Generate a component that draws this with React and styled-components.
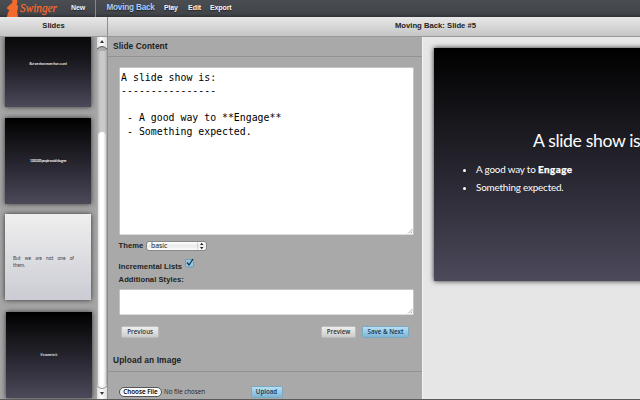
import React from "react";
import styled, { createGlobalStyle, css } from "styled-components";

const GlobalStyle = createGlobalStyle`
  * { box-sizing: border-box; }
  body { margin: 0; overflow: hidden; background: #a9a9a9; }
  button, textarea { margin: 0; font: inherit; }
`;

const Page = styled.div`
  width: 640px;
  height: 400px;
  display: flex;
  flex-direction: column;
  overflow: hidden;
  font-family: "Liberation Sans", Arial, sans-serif;
  font-size: 7.5px;
  color: #222;
  border-bottom: 1px solid #5b5959;
`;

const TopBar = styled.header`
  height: 17px;
  flex: none;
  display: flex;
  background: linear-gradient(#4a4d51, #414549 80%, #303438);
`;

const BrandArea = styled.div`
  width: 96px;
  display: flex;
  border-right: 1px solid #85888b;
`;

const Logo = styled.svg`
  width: 53px;
  height: 17px;
  margin-left: 6px;
  flex: none;
  overflow: visible;
`;

const NavLink = styled.a`
  width: ${(p) => p.$width}px;
  flex: none;
  margin-left: ${(p) => p.$gap}px;
  line-height: 16px;
  font-size: ${(p) => (p.$current ? 8.2 : 7)}px;
  font-weight: bold;
  letter-spacing: ${(p) => p.$track || 0}px;
  white-space: nowrap;
  color: ${(p) => (p.$current ? "#a9cdfb" : "#f7f7f7")};
  text-shadow: 0 1px 1px #222;
`;

const TitleBar = styled.div`
  height: 20px;
  flex: none;
  display: flex;
  line-height: 17px;
  font-weight: bold;
  text-align: center;
  background: linear-gradient(#e8e8e8, #c5c5c5);
  border-bottom: 1px solid #999;
  box-shadow: 0 1px 0 #aaa;
`;

const SlidesTitle = styled.div`
  width: 108px;
  border-right: 1px solid #8d8d8d;
  font-size: 7.6px;
`;

const DocumentTitle = styled.div`
  flex: 1;
  padding-left: 123px;
  font-size: 7.7px;
`;

const Body = styled.main`
  height: 362px;
  flex: 1;
  display: flex;
`;

const Sidebar = styled.aside`
  width: 97px;
  flex: none;
  display: flex;
  flex-direction: column;
  gap: 10.5px;
  padding-left: 5px;
  background: #a5a5a5;
  overflow: hidden;
`;

const Thumb = styled.div`
  width: 86px;
  height: ${(p) => p.$height || 86}px;
  margin-left: ${(p) => p.$shift || 0}px;
  margin-top: ${(p) => p.$top || 0}px;
  padding-top: ${(p) => p.$textTop}px;
  flex: none;
  text-align: center;
  font: bold 3px/4px "Lato", sans-serif;
  letter-spacing: ${(p) => p.$track || 0}px;
  color: #eee;
  background: linear-gradient(${(p) => p.$from || "#000"}, #16161b 30%, #302e3a 65%, #4c4a59);
  box-shadow: 0 0 5px #333;
  white-space: nowrap;
  ${(p) => p.$light && css`
    padding-left: 8px;
    text-align: left;
    font: 4.9px/6.6px "Lato", sans-serif;
    word-spacing: 2.9px;
    color: #444;
    background: linear-gradient(#efefef, #cbccd4);
  `}
`;

const ScrollBar = styled.div`
  width: 11px;
  flex: none;
  display: flex;
  flex-direction: column;
  background: linear-gradient(90deg, #aaa, #cacaca 35%, #c9c9c9 75%, #aaa);
  border-right: 1px solid #8d8d8d;
`;

const ScrollCap = styled.div`
  height: ${(p) => p.$height}px;
  display: flex;
  background: linear-gradient(90deg, #ddd, #fff 45%, #ddd);
  svg { width: 10px; height: 100%; }
`;

const ScrollThumb = styled.div`
  height: 253px;
  margin: auto 1px 0;
  width: 8px;
  border-radius: 4px 4px 0 0;
  background: linear-gradient(90deg, #e2e2e2, #fff 30%, #fff 65%, #d6d6d6);
`;

const Editor = styled.section`
  width: 315px;
  flex: none;
  background: #a9a9a9;
  border-right: 1px solid #f3f3f3;
`;

const SectionHead = styled.h2`
  height: ${(p) => p.$height}px;
  margin: 0;
  padding: 0 0 0 5px;
  line-height: 19px;
  font-size: 8.4px;
  font-weight: bold;
  letter-spacing: ${(p) => p.$track || 0}px;
  border-bottom: 1px solid #929292;
`;

const Form = styled.div`
  padding: 10px 8px 0 10.6px;
`;

const Field = styled.div`
  height: ${(p) => p.$height}px;
  display: flex;
  justify-content: space-between;
  padding: 2.5px 0 0 1.5px;
  background: #fff;
  border: 1px solid #c4c4c4;
  border-bottom-color: #ddd;
  border-radius: 2px;
`;

const StylesField = styled(Field)`
  margin-top: 5.5px;
  justify-content: flex-end;
`;

const Code = styled.pre`
  margin: 0;
  font: 9.87px/13.5px "DejaVu Sans Mono", monospace;
  color: #000;
`;

const Grip = styled.svg`
  width: 6px;
  height: 6px;
  align-self: flex-end;
`;

const FormRow = styled.div`
  height: ${(p) => p.$height}px;
  display: flex;
  align-items: center;
  font-weight: bold;
`;

const Caption = styled.label`
  width: ${(p) => p.$width || 70}px;
  flex: none;
  white-space: nowrap;
  font-size: 7.6px;
  letter-spacing: 0.06px;
`;

const SelectBox = styled.div`
  width: 61px;
  height: 10px;
  display: flex;
  align-items: center;
  justify-content: space-between;
  padding-left: 4px;
  font: 500 6.9px/8px "Open Sans", sans-serif;
  color: #111;
  background: linear-gradient(#fff, #e9e9e9 50%, #fff);
  border: 1px solid #888;
  border-radius: 3px;
  svg { width: 9px; height: 8px; }
`;

const Check = styled.svg`
  width: 9px;
  height: 10px;
  margin-top: -6px;
`;

const ActionRow = styled.div`
  display: flex;
  gap: 6px;
  margin-top: 10.5px;
  padding: 0 5px 0 2.6px;
`;

const Button = styled.button`
  width: ${(p) => p.$width}px;
  height: 12px;
  flex: none;
  padding: 0;
  margin-right: ${(p) => (p.$push ? "auto" : 0)};
  font: 600 6.2px/10px "Open Sans", sans-serif;
  letter-spacing: 0;
  color: ${(p) => (p.$primary ? "#17384d" : "#333")};
  border: 1px solid ${(p) => (p.$primary ? "#7aa9c2" : "#bbb")};
  border-radius: 1.5px;
  background: ${(p) => (p.$primary ? "linear-gradient(#b8def2, #7db5d5)" : "linear-gradient(#eee, #ccc)")};
`;

const UploadHead = styled(SectionHead)`
  margin-top: 13.5px;
`;

const UploadRow = styled.div`
  display: flex;
  align-items: center;
  padding: 14.5px 0 0 11px;
`;

const ChooseFile = styled.button`
  width: 43px;
  height: 10px;
  padding: 0;
  font: 600 6.3px/8px "Open Sans", sans-serif;
  color: #000;
  background: linear-gradient(#fff, #eee 50%, #fff);
  border: 1px solid #555;
  border-radius: 5px;
`;

const FileName = styled.span`
  width: 88.5px;
  padding-left: 2px;
  font: 6.2px/10px "Open Sans", sans-serif;
  color: #222;
`;

const PreviewPane = styled.section`
  flex: 1;
  min-width: 0;
  padding: 11px 0 0 11px;
  background: #e6e6e6;
`;

const Slide = styled.article`
  width: 310px;
  height: 233px;
  padding: 81.5px 0 0;
  color: #fff;
  background: linear-gradient(#000, #15151a 29%, #302e3a 65%, #4c4a5b);
  box-shadow: 0 0 5px #222;
  font-family: "Lato", sans-serif;
`;

const SlideTitle = styled.h1`
  margin: 0;
  padding-left: 99px;
  font-size: 17.6px;
  line-height: 22px;
  font-weight: 400;
  letter-spacing: -0.35px;
  white-space: nowrap;
`;

const Bullets = styled.ul`
  margin: 8px 0 0;
  padding: 0 0 0 42px;
  font-size: 9.9px;
  line-height: 18.7px;
  letter-spacing: -0.18px;
  b { font-weight: 900; letter-spacing: 0.45px; -webkit-text-stroke: 0.25px #fff; }
`;

const code = `A slide show is:
----------------

 - A good way to **Engage**
 - Something expected.`;

function ResizeGrip() {
  return (
    <Grip viewBox="0 0 6 6">
      <path d="M1 5.5 5.5 1M3.5 5.5 5.5 3.5" stroke="#888" strokeWidth=".7" fill="none" />
    </Grip>
  );
}

function SwingerLogo() {
  return (
    <Logo viewBox="0 0 53 17">
      <path fill="#f4692c" d="M6.3 0h5l-.2 1.5c.8 1-.1 2.3-.9 2.6l1.1 1c1 .5.8 2.5.5 4l-.6 2.5.8 5.4H.9l1-4.2c.6-.9 1.4-1.7 1.4-2.5L1 8.6c-.5-.3-.2-.9.3-1.4L4.5 4 6.3 3z" />
      <text x="14" y="12.4" fill="#f4692c" stroke="#f4692c" strokeWidth=".25" fontFamily="Liberation Serif, serif" fontStyle="italic" fontSize="13.5" textLength="37" lengthAdjust="spacingAndGlyphs">Swinger</text>
    </Logo>
  );
}

export default function App() {
  return (
    <>
      <GlobalStyle />
      <Page>
        <TopBar>
          <BrandArea>
            <SwingerLogo />
            <NavLink $gap={12} $width={20} $track={-0.1}>New</NavLink>
          </BrandArea>
          <NavLink $current $gap={10.4} $width={47.6} $track={-0.2}>Moving Back</NavLink>
          <NavLink $gap={10} $width={14} $track={-0.2}>Play</NavLink>
          <NavLink $gap={10} $width={13}>Edit</NavLink>
          <NavLink $gap={9} $width={24} $track={-0.1}>Export</NavLink>
        </TopBar>
        <TitleBar>
          <SlidesTitle>Slides</SlidesTitle>
          <DocumentTitle>Moving Back: Slide #5</DocumentTitle>
        </TitleBar>
        <Body>
          <Sidebar>
            <Thumb $height={70} $from="#09090b" $textTop={24.5} $track={-0.12}>But we show more than a card</Thumb>
            <Thumb $textTop={41} $track={-0.26}>1,000,000 people would disagree</Thumb>
            <Thumb $light $textTop={41}>But we are not one of<br />them.</Thumb>
            <Thumb $shift={1} $top={1.5} $textTop={40.5} $track={-0.1}>It's come to it.</Thumb>
          </Sidebar>
          <ScrollBar>
            <ScrollCap $height={14}>
              <svg viewBox="0 0 10 14">
                <path d="M0 14V12Q5 7 10 12v2z" fill="#aaa" />
                <path d="M0 12Q5 7 10 12" stroke="#555" fill="none" />
                <path d="m3 6 2-3 2 3z" fill="#333" />
              </svg>
            </ScrollCap>
            <ScrollThumb />
            <ScrollCap $height={14}>
              <svg viewBox="0 0 10 14">
                <path d="M0 1Q5 6 10 1" stroke="#777" fill="none" strokeWidth=".8" />
                <path d="m3 7 2 3 2-3z" fill="#333" />
              </svg>
            </ScrollCap>
          </ScrollBar>
          <Editor>
            <SectionHead $height={20} $track={0.05}>Slide Content</SectionHead>
            <Form>
              <Field $height={167.5}><Code>{code}</Code><ResizeGrip /></Field>
              <FormRow $height={22.5}>
                <Caption $width={27.4}>Theme</Caption>
                <SelectBox>
                  basic
                  <svg viewBox="0 0 9 8">
                    <path d="M.5 0v8" stroke="#ccc" strokeWidth=".7" />
                    <path d="m3 3 1.7-2.3L6.4 3zm0 2h3.4L4.7 7.3z" fill="#222" />
                  </svg>
                </SelectBox>
              </FormRow>
              <FormRow $height={18.5}>
                <Caption $width={66.4}>Incremental Lists</Caption>
                <Check viewBox="0 0 9 10">
                  <rect x=".5" y="1.5" width="8" height="7.5" rx="1" fill="#93c7e2" stroke="#5f90aa" strokeWidth=".7" />
                  <path d="m2 4.5 2 2.5 4-6" stroke="#15344c" strokeWidth="1.3" fill="none" />
                </Check>
              </FormRow>
              <FormRow $height={8}><Caption>Additional Styles:</Caption></FormRow>
              <StylesField $height={26}><ResizeGrip /></StylesField>
              <ActionRow>
                <Button $width={38} $push>Previous</Button>
                <Button $width={35}>Preview</Button>
                <Button $width={47} $primary>Save &amp; Next</Button>
              </ActionRow>
            </Form>
            <UploadHead $height={20.5} $track={0.09}>Upload an Image</UploadHead>
            <UploadRow>
              <ChooseFile>Choose File</ChooseFile>
              <FileName>No file chosen</FileName>
              <Button $width={32} $primary>Upload</Button>
            </UploadRow>
          </Editor>
          <PreviewPane>
            <Slide>
              <SlideTitle>A slide show is</SlideTitle>
              <Bullets>
                <li>A good way to <b>Engage</b></li>
                <li>Something expected.</li>
              </Bullets>
            </Slide>
          </PreviewPane>
        </Body>
      </Page>
    </>
  );
}
